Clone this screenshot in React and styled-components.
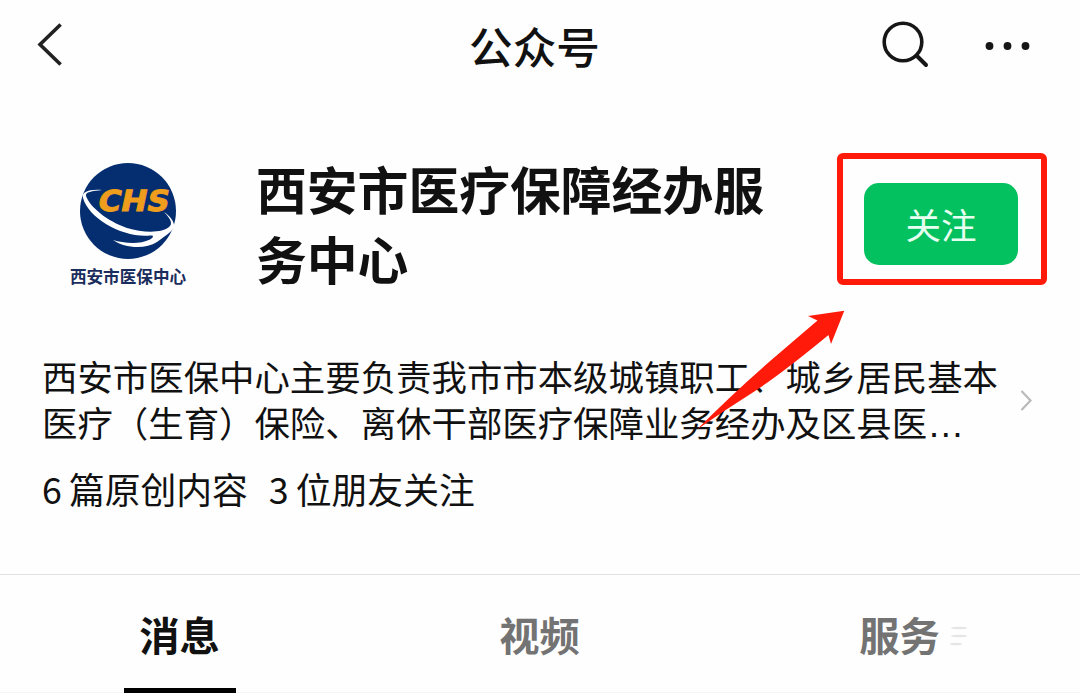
import React, { useState } from "react";
import styled, { createGlobalStyle } from "styled-components";

const GlobalStyle = createGlobalStyle`
  * {
    box-sizing: border-box;
  }

  body {
    margin: 0;
    background: #fefefe;
    font-family: "Noto Sans CJK SC", sans-serif;
    color: #111;
  }
`;

// --- 布局 ---

const Page = styled.div`
  position: relative;
  display: flex;
  flex-direction: column;
  width: 1080px;
  height: 693px;
  overflow: hidden;
  background: #fefefe;
`;

const Header = styled.header`
  display: grid;
  grid-template-columns: 1fr auto 1fr;
  align-items: center;
  height: 90px;
  padding: 0 50px 0 35px;
`;

const HeaderTitle = styled.h1`
  margin: 0;
  padding-left: 4px;
  font-size: 43.6px;
  font-weight: 500;
  line-height: 88px;
`;

const HeaderActions = styled.div`
  display: flex;
  align-items: center;
  justify-content: flex-end;
  gap: 55px;
`;

const IconButton = styled.button`
  display: flex;
  justify-self: start;
  padding: 0;
  border: none;
  background: none;
  color: #161616;
  cursor: pointer;
`;

const Profile = styled.section`
  display: flex;
  align-items: flex-start;
  height: 261px;
  padding: 62px 62px 0 68px;
`;

const Avatar = styled.div`
  display: flex;
  flex-direction: column;
  align-items: center;
  width: 120px;
  padding-top: 10px;
`;

const AvatarCaption = styled.span`
  font-size: 16.6px;
  font-weight: 700;
  line-height: 32px;
  white-space: nowrap;
  color: #1a2d5c;
`;

const AccountName = styled.h2`
  flex: 1;
  margin: 1px 0 0 68px;
  padding-right: 70px;
  font-size: 50.8px;
  font-weight: 700;
  line-height: 70px;
`;

const FollowArea = styled.div`
  position: relative;
  margin-top: 31px;
`;

const FollowButton = styled.button`
  display: block;
  width: 154px;
  height: 82px;
  padding: 0;
  border: none;
  border-radius: 15px;
  background: #04c160;
  color: #e6fff0;
  font-family: inherit;
  font-size: 35.5px;
  font-weight: 400;
  line-height: 80px;
  cursor: pointer;
`;

/* 关注按钮外的红色标注框 */
const Highlight = styled.div`
  position: absolute;
  inset: -30.5px -28.5px -19.5px -27.5px;
  border: 6px solid #ff1a0a;
  border-radius: 6px;
  pointer-events: none;
`;

const Intro = styled.section`
  display: flex;
  align-items: center;
  justify-content: space-between;
  height: 92px;
  margin-top: 2px;
  padding: 0 47px 0 42px;
`;

const IntroText = styled.p`
  margin: 0;
  font-size: 35.42px;
  line-height: 46px;
  white-space: nowrap;
`;

/* 省略号贴近基线 */
const Ellipsis = styled.span`
  font-family: "Liberation Sans", sans-serif;
  font-size: 37px;
  line-height: 1;
`;

const Stats = styled.div`
  display: flex;
  gap: 21px;
  height: 129px;
  padding: 18px 41px 0 42px;
  font-size: 35.8px;
  line-height: 50px;
`;

const Stat = styled.span`
  display: flex;
  gap: 7px;
`;

const Tabs = styled.nav`
  display: grid;
  grid-template-columns: repeat(3, 1fr);
  height: 119px;
  border-top: 1px solid #e3e3e3;
  border-bottom: 1px solid #f5f5f5;
`;

const Tab = styled.button`
  position: relative;
  padding: 0 1px 1px 0;
  border: none;
  background: none;
  color: ${(props) => (props.$active ? "#111" : "#737373")};
  font-family: inherit;
  font-size: 40.3px;
  font-weight: 700;
  line-height: 115px;
  cursor: pointer;

  &::after {
    content: "";
    position: absolute;
    left: 124px;
    bottom: -1px;
    width: 112px;
    height: 5px;
    background: ${(props) => (props.$active ? "#000" : "transparent")};
  }
`;

const TabMark = styled.svg`
  position: absolute;
  left: 228px;
  top: 49px;
`;

const Arrow = styled.svg`
  position: absolute;
  left: 690px;
  top: 304px;
  pointer-events: none;
`;

// --- 图标 ---

const BackIcon = () => (
  <svg width="30" height="46" viewBox="0 0 30 46" fill="none">
    <path d="M25.6 2.5L5 22.5L25.6 42.5" stroke="#222" strokeWidth="3.6" />
  </svg>
);

const SearchIcon = () => (
  <svg width="48" height="50" viewBox="0 0 48 50" fill="none">
    <circle cx="22" cy="22" r="18.8" stroke="currentColor" strokeWidth="3.6" />
    <path
      d="M35.5 35.5L45 45"
      stroke="currentColor"
      strokeWidth="4"
      strokeLinecap="round"
    />
  </svg>
);

const MoreIcon = () => (
  <svg width="46" height="12" viewBox="0 0 46 12" fill="currentColor">
    <circle cx="5.5" cy="7" r="3.9" />
    <circle cx="23.5" cy="7" r="3.9" />
    <circle cx="41.5" cy="7" r="3.9" />
  </svg>
);

const ChevronIcon = () => (
  <svg width="14" height="24" viewBox="0 0 14 24" fill="none">
    <path d="M2.5 4L11.5 13.5L2.5 23" stroke="#b9b9b9" strokeWidth="2.2" />
  </svg>
);

const Logo = () => (
  <svg width="100" height="98" viewBox="0 0 100 98">
    <circle cx="50" cy="49" r="48" fill="#052e70" />
    <path
      d="M24 28C11 27 3 30 5 36C11 57 45 76 72 73.5C76 73 76 75 72 77.5C61 83 45 81 35 78C46 86 67 88 79 80C84 76 94 70 96 65C97 60 91 53 86 50C93 57 95 62 91 65C85 71 65 71 49 66C29 59 12 45 8 34C7 30 14 29 24 28Z"
      fill="#fff"
    />
    <text
      transform="translate(18.5 48.5) skewX(-12)"
      fill="#ef9d1c"
      stroke="#ef9d1c"
      strokeWidth="1"
      fontFamily="DejaVu Sans, sans-serif"
      fontSize="29"
      fontWeight="700"
      textLength="71"
      lengthAdjust="spacingAndGlyphs"
    >
      CHS
    </text>
  </svg>
);

const tabs = ["消息", "视频", "服务"];

const introLines = [
  "西安市医保中心主要负责我市市本级城镇职工、城乡居民基本",
  "医疗（生育）保险、离休干部医疗保障业务经办及区县医",
];

const App = () => {
  const [activeTab, setActiveTab] = useState("消息");

  return (
    <>
      <GlobalStyle />
      <Page>
        <Header>
          <IconButton aria-label="返回">
            <BackIcon />
          </IconButton>
          <HeaderTitle>公众号</HeaderTitle>
          <HeaderActions>
            <IconButton aria-label="搜索">
              <SearchIcon />
            </IconButton>
            <IconButton aria-label="更多">
              <MoreIcon />
            </IconButton>
          </HeaderActions>
        </Header>

        <Profile>
          <Avatar>
            <Logo />
            <AvatarCaption>西安市医保中心</AvatarCaption>
          </Avatar>
          <AccountName>西安市医疗保障经办服务中心</AccountName>
          <FollowArea>
            <FollowButton>关注</FollowButton>
            <Highlight />
          </FollowArea>
        </Profile>

        <Intro>
          <IntroText>
            {introLines[0]}
            <br />
            {introLines[1]}
            <Ellipsis>…</Ellipsis>
          </IntroText>
          <ChevronIcon />
        </Intro>

        <Stats>
          <Stat>
            <span>6</span>
            <span>篇原创内容</span>
          </Stat>
          <Stat>
            <span>3</span>
            <span>位朋友关注</span>
          </Stat>
        </Stats>

        <Tabs>
          {tabs.map((tab) => (
            <Tab
              key={tab}
              $active={tab === activeTab}
              onClick={() => setActiveTab(tab)}
            >
              {tab}
              {tab === "服务" && (
                <TabMark width="28" height="24" viewBox="0 0 28 24">
                  <g fill="#e6e6e6">
                    <ellipse cx="11" cy="4" rx="8" ry="1.3" />
                    <ellipse cx="11" cy="12" rx="8" ry="1.3" />
                    <ellipse cx="8" cy="20" rx="6" ry="1.3" />
                  </g>
                </TabMark>
              )}
            </Tab>
          ))}
        </Tabs>

        {/* 指向关注按钮的箭头 */}
        <Arrow width="160" height="130" viewBox="0 0 160 130">
          <path
            d="M154.3 6.7L118 12L127.5 16.5Q100 40 79 58Q40 92 7 125.5Q35 106 62 89Q90 71 138.5 31L141 40Z"
            fill="#ff1a0a"
          />
        </Arrow>
      </Page>
    </>
  );
};

export default App;
